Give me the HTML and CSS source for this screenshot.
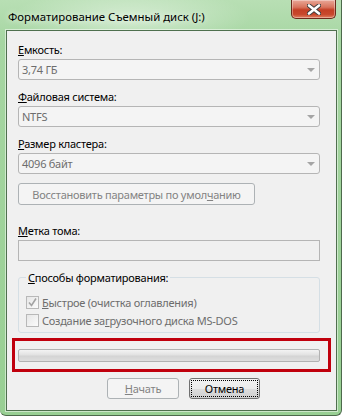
FILE: index.html
```html
<!DOCTYPE html>
<html lang="ru">
<head>
    <meta charset="UTF-8">
    <meta name="viewport" content="width=device-width, initial-scale=1.0">
    <title>Форматирование Съемный диск (J:)</title>
    <link rel="stylesheet" href="styles.css">
</head>
<body>
    <div class="window">
        <div class="titlebar">
            <span class="title">Форматирование Съемный диск (J:)</span>
            <div class="close-btn">
                <svg width="14" height="11" viewBox="0 0 14 11">
                    <path d="M2 1.5 L12 9.5 M12 1.5 L2 9.5" stroke="#3b3b3b" stroke-width="4.4" stroke-linecap="round"/>
                    <path d="M2 1.5 L12 9.5 M12 1.5 L2 9.5" stroke="#ffffff" stroke-width="2.6" stroke-linecap="round"/>
                </svg>
            </div>
        </div>

        <div class="client">
            <div class="field">
                <p class="label"><u>Е</u>мкость:</p>
                <div class="combo"><span>3,74 ГБ</span><i class="arrow"></i></div>
            </div>
            <div class="field">
                <p class="label"><u>Ф</u>айловая система:</p>
                <div class="combo"><span>NTFS</span><i class="arrow"></i></div>
            </div>
            <div class="field">
                <p class="label"><u>Р</u>азмер кластера:</p>
                <div class="combo"><span>4096 байт</span><i class="arrow"></i></div>
            </div>

            <div class="btn btn-restore"><span>Восстановить параметры по умол<u>ч</u>анию</span></div>

            <div class="field field-volume">
                <p class="label"><u>М</u>етка тома:</p>
                <div class="textbox"></div>
            </div>

            <fieldset class="group">
                <legend><u>С</u>пособы форматирования:</legend>
                <div class="check-row">
                    <span class="checkbox">
                        <svg width="11" height="11" viewBox="0 0 11 11">
                            <path d="M2 5.5 L4.5 8.5 L9 1.5" fill="none" stroke="#a3a3a3" stroke-width="1.6"/>
                        </svg>
                    </span>
                    <span><u>Б</u>ыстрое (очистка оглавления)</span>
                </div>
                <div class="check-row">
                    <span class="checkbox"></span>
                    <span>Создание за<u>г</u>рузочного диска MS-DOS</span>
                </div>
            </fieldset>

            <div class="highlight">
                <div class="progress"></div>
            </div>

            <div class="buttons">
                <div class="btn btn-start"><span><u>Н</u>ачать</span></div>
                <div class="btn btn-cancel"><span class="focus">Отмена</span></div>
            </div>
        </div>
    </div>
</body>
</html>
```

FILE: styles.css
```css
body {
    margin: 0;
    background: #ffffff;
    font-family: "Noto Sans", "Open Sans", sans-serif;
    font-size: 11px;
    letter-spacing: -0.25px;
    color: #000;
}
.window {
    width: 342px;
    height: 416px;
    box-sizing: border-box;
    display: flex;
    flex-direction: column;
    background:
        radial-gradient(ellipse 120px 30px at 130px 18px, rgba(255, 255, 255, 0.45), rgba(255, 255, 255, 0)),
        linear-gradient(180deg, #b8dfb4 0%, #a6d6a2 10%, #98cf93 100%);
    border-right: 1px solid #4c6a4b;
    border-bottom: 1px solid #4c6a4b;
    border-radius: 0 0 6px 6px;
}
.titlebar {
    height: 30px;
    display: flex;
    justify-content: space-between;
    align-items: flex-start;
    padding: 0 5px 0 8px;
}
.title {
    font-size: 11.4px;
    letter-spacing: 0;
    line-height: 15px;
    margin-top: 9px;
    text-shadow: 0 0 6px rgba(255, 255, 255, 0.9);
}
.close-btn {
    width: 45px;
    height: 19px;
    display: flex;
    align-items: center;
    justify-content: center;
    box-sizing: border-box;
    border: 1px solid #6b2a1c;
    border-top: none;
    border-radius: 0 0 5px 5px;
    background: linear-gradient(180deg, #e9a898 0%, #d8745d 40%, #c43f25 55%, #c8482c 80%, #e08060 100%);
    box-shadow: inset 0 0 0 1px rgba(255, 255, 255, 0.35);
}
.client {
    flex: 1;
    margin: 0 4px 4px 6px;
    background: #f0f0f0;
    border: 1px solid #4f704e;
    box-shadow: 0 0 0 1px rgba(255, 255, 255, 0.5);
    padding: 11px 16px 0 11px;
}
.label {
    margin: 0;
    line-height: 15px;
}
.field {
    margin-bottom: 9px;
}
.combo {
    height: 21px;
    margin-top: 2px;
    box-sizing: border-box;
    border: 1px solid #b5b5b5;
    border-radius: 3px;
    background: #f4f4f4;
    color: #6d6d6d;
    display: flex;
    align-items: center;
    justify-content: space-between;
    padding: 0 4px 0 3px;
}
.arrow {
    width: 0;
    height: 0;
    border-left: 4px solid transparent;
    border-right: 4px solid transparent;
    border-top: 4px solid #a5a5a5;
}
.btn {
    height: 21px;
    box-sizing: border-box;
    border: 1px solid #adb2b5;
    border-radius: 3px;
    background: #f4f4f4;
    color: #838383;
    display: flex;
    align-items: center;
    justify-content: center;
    white-space: nowrap;
}
.btn-restore {
    width: 237px;
    height: 22px;
    margin-top: 3px;
}
.field-volume {
    margin-top: 18px;
}
.textbox {
    height: 21px;
    margin-top: 2px;
    box-sizing: border-box;
    border: 1px solid #b5b5b5;
    background: #f0f0f0;
}
.group {
    margin: 8px 0 0;
    padding: 8px 0 3px 7px;
    border: 1px solid #d5dfe5;
    border-radius: 3px;
    min-width: 0;
}
.group legend {
    padding: 0 2px;
    line-height: 15px;
}
.check-row {
    height: 18px;
    display: flex;
    align-items: center;
    gap: 3px;
    color: #6d6d6d;
}
.checkbox {
    width: 13px;
    height: 13px;
    box-sizing: border-box;
    border: 1px solid #b8b8b8;
    background: linear-gradient(135deg, #e6e6e6, #fbfbfb);
    display: flex;
    align-items: center;
    justify-content: center;
}
.highlight {
    margin: 5px -11px 0 -6px;
    border: 3px solid #c0000d;
    padding: 8px 8px 7px 3px;
}
.progress {
    height: 13px;
    box-sizing: border-box;
    border: 1px solid #b2b2b2;
    border-radius: 2px;
    background: linear-gradient(180deg, #f3f3f3 0%, #e2e2e2 45%, #d4d4d4 55%, #dedede 100%);
}
.buttons {
    display: flex;
    gap: 10px;
    margin: 6px 0 0 89px;
}
.btn-start {
    width: 72px;
}
.btn-cancel {
    width: 71px;
    border-color: #707070;
    color: #000;
    background: linear-gradient(180deg, #f2f2f2 0%, #ebebeb 50%, #dddddd 51%, #cfcfcf 100%);
    padding: 2px;
}
.focus {
    flex: 1;
    align-self: stretch;
    display: flex;
    align-items: center;
    justify-content: center;
    outline: 1px dotted #000;
}
```
